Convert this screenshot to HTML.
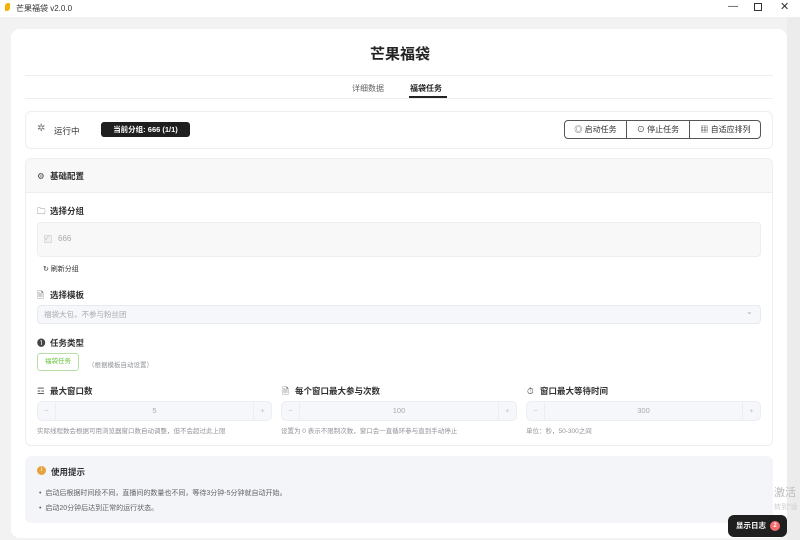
<!DOCTYPE html>
<html><head><meta charset="utf-8"><style>
*{box-sizing:border-box;margin:0;padding:0}
body{width:800px;height:540px;overflow:hidden;background:#f2f2f2;font-family:"Liberation Sans","Noto Sans CJK SC",sans-serif;color:#303133;position:relative}
.a{position:absolute}
.tb{left:0;top:0;width:800px;height:17px;background:#fff;font-size:8px;color:#333}
.card{left:11px;top:29px;width:776px;height:509px;background:#fff;border-radius:9px}
.sb{left:787px;top:17px;width:13px;height:523px;background:#ececec}
.t{font-size:7.5px;color:#606266}
.b{font-weight:bold;color:#303133;font-size:8.5px}
.b span{display:inline-block;width:13px;font-weight:normal;color:#444}
.inp{background:#f5f7fa;border:1px solid #e8eaee;border-radius:4px}
.hint{font-size:6.5px;color:#909399}
.num{height:20px;background:#f5f7fa;border:1px solid #eceef2;border-radius:5px;font-size:7.5px;color:#a8abb2;text-align:center;line-height:18px}
.num i{position:absolute;top:0;width:18px;height:18px;font-style:normal;color:#c0c4cc}
</style></head><body>
<div class="a tb"><span class="a" style="left:5px;top:3px;width:5px;height:8px;background:#f2b400;border-radius:3px 1px 3px 1px"></span><span class="a" style="left:16px;top:3px">芒果福袋 v2.0.0</span>
<span class="a" style="left:728px;top:1px;font-size:10px">—</span><span class="a" style="left:754px;top:3px;width:8px;height:8px;border:1px solid #333"></span><span class="a" style="left:780px;top:0px;font-size:11px">✕</span></div>
<div class="a sb"></div>
<div class="a card"></div>
<div class="a" style="left:0;width:800px;top:43px;text-align:center;font-size:15px;font-weight:bold;color:#222">芒果福袋</div>
<div class="a" style="left:25px;top:75px;width:748px;height:1px;background:#eee"></div>
<div class="a" style="left:25px;top:98px;width:748px;height:1px;background:#eee"></div>
<div class="a t" style="left:352px;top:83px;font-size:8px">详细数据</div>
<div class="a" style="left:410px;top:83px;font-size:8px;font-weight:bold;color:#222">福袋任务</div>
<div class="a" style="left:409px;top:96px;width:38px;height:2px;background:#222"></div>

<div class="a" style="left:25px;top:111px;width:748px;height:38px;border:1px solid #eee;border-radius:6px"></div>
<div class="a" style="left:37px;top:123px;font-size:10px;color:#777">✲</div>
<div class="a t" style="left:54px;top:125px;font-size:8.5px;color:#333">运行中</div>
<div class="a" style="left:101px;top:122px;width:89px;height:15px;background:#1f1f1f;border-radius:3px;color:#fff;font-size:7.5px;font-weight:bold;text-align:center;line-height:15px">当前分组: 666 (1/1)</div>
<div class="a" style="left:564px;top:120px;width:197px;height:19px;border:1px solid #555;border-radius:4px;font-size:8px;color:#333">
<span class="a" style="left:0;top:0;width:62px;height:17px;border-right:1px solid #555;text-align:center;line-height:17px">◎ 启动任务</span>
<span class="a" style="left:62px;top:0;width:63px;height:17px;border-right:1px solid #555;text-align:center;line-height:17px">⊙ 停止任务</span>
<span class="a" style="left:125px;top:0;width:71px;height:17px;text-align:center;line-height:17px">▦ 自适应排列</span></div>

<div class="a" style="left:25px;top:158px;width:748px;height:288px;border:1px solid #eee;border-radius:6px;overflow:hidden"><div style="height:34px;background:#f8f8f8;border-bottom:1px solid #eee"></div></div>
<div class="a b" style="left:37px;top:170px"><span>⚙</span>基础配置</div>
<div class="a b" style="left:37px;top:205px"><span>🗀</span>选择分组</div>
<div class="a inp" style="left:37px;top:222px;width:724px;height:35px;background:#f8f8f8;border-color:#eee"></div>
<div class="a" style="left:44px;top:235px;width:8px;height:8px;border:1px solid #ddd;background:#eef0f4;font-size:6px;color:#bbb;line-height:6px">✓</div>
<div class="a hint" style="left:58px;top:234px;font-size:8px;color:#aaa">666</div>
<div class="a" style="left:43px;top:264px;font-size:7px;color:#333">↻ 刷新分组</div>
<div class="a b" style="left:37px;top:289px"><span>🗎</span>选择模板</div>
<div class="a inp" style="left:37px;top:305px;width:724px;height:19px"></div>
<div class="a hint" style="left:44px;top:309px;font-size:7.5px;color:#a8abb2">福袋大包，不参与粉丝团</div>
<div class="a" style="left:746px;top:307px;font-size:8px;color:#aaa">⌄</div>
<div class="a b" style="left:37px;top:337px"><span>❶</span>任务类型</div>
<div class="a" style="left:37px;top:353px;width:42px;height:18px;border:1px solid #b7e0a8;border-radius:3px;font-size:6.5px;color:#67c23a;text-align:center;line-height:16px">福袋任务</div>
<div class="a hint" style="left:88px;top:359px">（根据模板自动设置）</div>

<div class="a b" style="left:37px;top:385px"><span>☲</span>最大窗口数</div>
<div class="a b" style="left:282px;top:385px"><span>🗎</span>每个窗口最大参与次数</div>
<div class="a b" style="left:527px;top:385px"><span>⏱</span>窗口最大等待时间</div>
<div class="a num" style="left:37px;top:401px;width:235px"><i style="left:0;border-right:1px solid #eceef2">−</i>5<i style="right:0;border-left:1px solid #eceef2">+</i></div>
<div class="a num" style="left:281px;top:401px;width:236px"><i style="left:0;border-right:1px solid #eceef2">−</i>100<i style="right:0;border-left:1px solid #eceef2">+</i></div>
<div class="a num" style="left:526px;top:401px;width:235px"><i style="left:0;border-right:1px solid #eceef2">−</i>300<i style="right:0;border-left:1px solid #eceef2">+</i></div>
<div class="a hint" style="left:37px;top:425px">实际线程数会根据可用浏览器窗口数自动调整，但不会超过此上限</div>
<div class="a hint" style="left:281px;top:425px">设置为 0 表示不限制次数，窗口会一直循环参与直到手动停止</div>
<div class="a hint" style="left:526px;top:425px">单位：秒，50-300之间</div>

<div class="a" style="left:25px;top:456px;width:748px;height:67px;background:#f4f5f8;border-radius:6px"></div>
<div class="a" style="left:37px;top:466px;width:9px;height:9px;border-radius:50%;background:#e6a23c;color:#fff;font-size:6px;text-align:center;line-height:9px">i</div>
<div class="a b" style="left:51px;top:466px">使用提示</div>
<div class="a hint" style="left:39px;top:488px;font-size:7px;color:#606266">•&nbsp;&nbsp;启动后根据时间段不同，直播间的数量也不同，等待3分钟-5分钟就自动开始。</div>
<div class="a hint" style="left:39px;top:503px;font-size:7px;color:#606266">•&nbsp;&nbsp;启动20分钟后达到正常的运行状态。</div>

<div class="a" style="left:774px;top:484px;font-size:11px;color:#bbb">激活</div>
<div class="a" style="left:774px;top:502px;font-size:7px;color:#ccc">转到"设</div>
<div class="a" style="left:728px;top:515px;width:59px;height:22px;background:#1f1f1f;border-radius:6px;color:#fff;font-size:7.5px;font-weight:bold;line-height:22px;padding-left:8px">显示日志<span class="a" style="left:42px;top:6px;width:10px;height:10px;border-radius:50%;background:#f56c6c;font-size:6px;text-align:center;line-height:10px">2</span></div>
</body></html>
